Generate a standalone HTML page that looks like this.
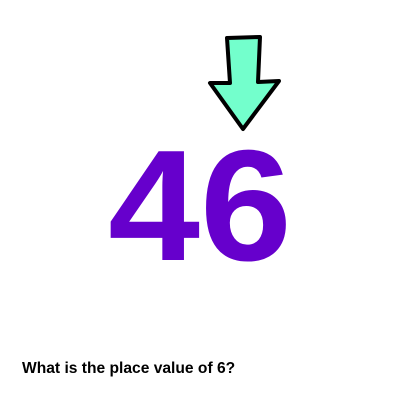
<!DOCTYPE html>
<html><head><style>
body{margin:0;width:400px;height:400px;background:#fff;position:relative;overflow:hidden;font-family:"Liberation Sans",sans-serif}
.num{position:absolute;left:0;width:400px;text-align:center;top:127px;font-size:158px;font-weight:bold;color:#6600CC;line-height:1;transform:scaleX(1.045)}
.q{position:absolute;left:22px;top:360px;font-size:15.6px;font-weight:bold;color:#000}
</style></head><body>
<svg style="position:absolute;left:0;top:0" width="400" height="400">
<path d="M227 38 L260 37 L258 82 L279 81 L243 129 L210 83 L230 83 Z" fill="#73FFCC" stroke="#000" stroke-width="4" stroke-linejoin="round"/>
</svg>
<div class="num">46</div>
<div class="q">What is the place value of 6?</div>
</body></html>
